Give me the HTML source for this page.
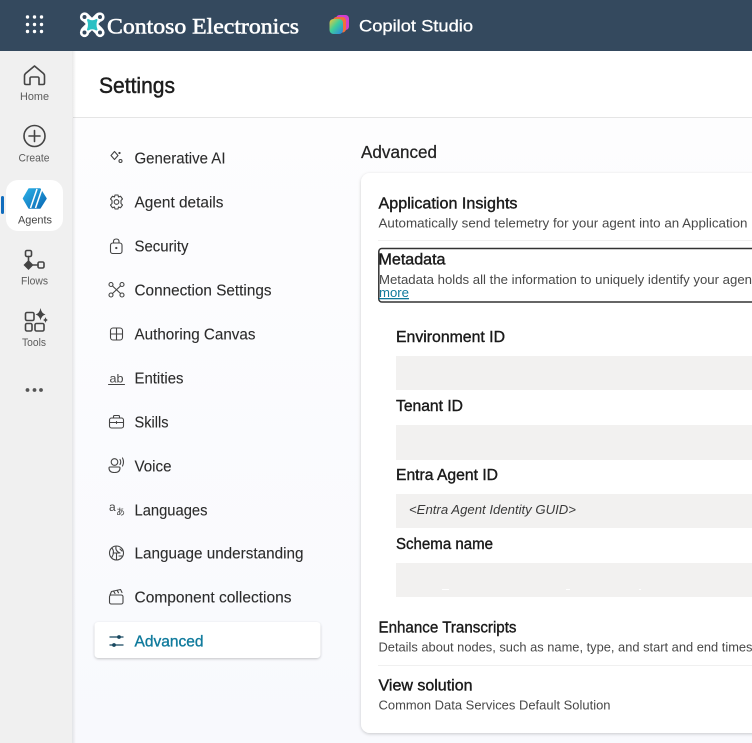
<!DOCTYPE html>
<html lang="en">
<head>
<meta charset="utf-8">
<title>Settings - Copilot Studio</title>
<style>
html,body{margin:0;padding:0;background:#fff;width:752px;height:743px;overflow:hidden}
svg{display:block}
text{font-family:"Liberation Sans",Arial,sans-serif;}
.nav{font-size:15.5px;fill:#2b2b2b;stroke:#2b2b2b;stroke-width:.1}
.side{font-size:11px;fill:#5c5c5c;text-anchor:middle}
.h{font-size:15.5px;fill:#1a1a1a;stroke:#1a1a1a;stroke-width:.38}
.d{font-size:13px;fill:#484848}
.ic{fill:none;stroke:#444;stroke-width:1.1;stroke-linecap:round;stroke-linejoin:round}
.sb{fill:none;stroke:#444;stroke-width:1.6;stroke-linecap:round;stroke-linejoin:round}
</style>
</head>
<body>
<svg width="752" height="743" viewBox="0 0 752 743" xmlns="http://www.w3.org/2000/svg">
<defs>
<linearGradient id="bg" x1="0" y1="0" x2="0" y2="1"><stop offset="0" stop-color="#fdfdfe"/><stop offset="1" stop-color="#f8f9fd"/></linearGradient>
<linearGradient id="sh" x1="0" y1="0" x2="1" y2="0"><stop offset="0" stop-color="#000" stop-opacity=".09"/><stop offset="1" stop-color="#000" stop-opacity="0"/></linearGradient>
<linearGradient id="cp" x1="0" y1="0" x2="1" y2="1"><stop offset="0" stop-color="#f3c63a"/><stop offset=".45" stop-color="#3fcf9a"/><stop offset="1" stop-color="#2b7fe8"/></linearGradient>
<linearGradient id="ag" x1="0" y1="0" x2="1" y2="1"><stop offset="0" stop-color="#2bb0e6"/><stop offset="1" stop-color="#0a68b4"/></linearGradient>
<filter id="cs" x="-5%" y="-5%" width="110%" height="110%"><feDropShadow dx="0" dy="1" stdDeviation="1.5" flood-color="#000" flood-opacity=".2"/></filter>
<filter id="is" x="-5%" y="-20%" width="110%" height="140%"><feDropShadow dx="0" dy="1" stdDeviation="1.2" flood-color="#000" flood-opacity=".22"/></filter>
</defs>

<!-- page background -->
<rect x="72" y="51" width="680" height="692" fill="#fff"/>
<rect x="72" y="118" width="680" height="625" fill="url(#bg)"/>
<rect x="73" y="117" width="679" height="1" fill="#e5e5e5"/>

<!-- left rail -->
<rect x="0" y="51" width="72" height="692" fill="#f0f0f0"/>
<rect x="72" y="51" width="4" height="692" fill="url(#sh)"/>

<!-- top bar -->
<rect x="0" y="0" width="752" height="51" fill="#34495e"/>
<g fill="#fff">
<circle cx="27.5" cy="17" r="1.7"/><circle cx="34.5" cy="17" r="1.7"/><circle cx="41.5" cy="17" r="1.7"/>
<circle cx="27.5" cy="24.5" r="1.7"/><circle cx="34.5" cy="24.5" r="1.7"/><circle cx="41.5" cy="24.5" r="1.7"/>
<circle cx="27.5" cy="31.5" r="1.7"/><circle cx="34.5" cy="31.5" r="1.7"/><circle cx="41.5" cy="31.5" r="1.7"/>
</g>
<!-- drone logo -->
<g>
<path d="M85 17 L99 31 M99 17 L85 31" stroke="#fff" stroke-width="9" stroke-linecap="round"/>
<circle cx="84.500" cy="17" r="3.300" fill="#34495e" stroke="#fff" stroke-width="2.600"/>
<circle cx="100" cy="17" r="3.300" fill="#34495e" stroke="#fff" stroke-width="2.600"/>
<circle cx="84.500" cy="32.500" r="3.300" fill="#34495e" stroke="#fff" stroke-width="2.600"/>
<circle cx="100" cy="32.500" r="3.300" fill="#34495e" stroke="#fff" stroke-width="2.600"/>
<path d="M88 20 Q92.200 22.500 96.500 20 Q94.500 24.700 96.500 29.500 Q92.200 27 88 29.500 Q90 24.700 88 20Z" fill="#2cc0c4" stroke="#2cc0c4" stroke-width="2" stroke-linejoin="round"/>
</g>
<text x="107" y="33.500" font-size="22" fill="#fff" stroke="#fff" stroke-width=".55" textLength="192" lengthAdjust="spacingAndGlyphs" style="font-family:'Liberation Serif',serif">Contoso Electronics</text>
<!-- copilot logo -->
<g>
<rect x="336" y="15" width="13" height="15" rx="3.500" fill="#d23fd0"/>
<rect x="333" y="17" width="13" height="15.500" rx="3.500" fill="#f0703c"/>
<rect x="329.500" y="19" width="13.500" height="15" rx="4" fill="url(#cp)"/>
</g>
<text x="359" y="31.500" font-size="17" fill="#fff" stroke="#fff" stroke-width=".3" textLength="114" lengthAdjust="spacingAndGlyphs">Copilot Studio</text>

<!-- rail items -->
<path class="sb" d="M25.500 73.500 L34.500 66 L43.500 73.500 Q44.500 74.500 44.500 76 V83 Q44.500 84.500 43 84.500 H39 V78.500 Q39 77 37.500 77 H31.500 Q30 77 30 78.500 V84.500 H26 Q24.500 84.500 24.500 83 V76 Q24.500 74.500 25.500 73.500Z"/>
<text class="side" x="34.500" y="100" textLength="29" lengthAdjust="spacingAndGlyphs">Home</text>
<circle class="sb" cx="34.500" cy="136" r="10.500"/>
<path class="sb" d="M34.500 130.500 V141.500 M29 136 H40"/>
<text class="side" x="34" y="161.500" textLength="31" lengthAdjust="spacingAndGlyphs">Create</text>

<rect x="6" y="180" width="57" height="51" rx="12" fill="#fff"/>
<rect x="1" y="196" width="3" height="18" rx="1.500" fill="#0f6cbd"/>
<path d="M29 189 H40 L46 198.500 L40 208 H29 L23.500 198.500 Z" fill="url(#ag)" stroke="url(#ag)" stroke-width="1.500" stroke-linejoin="round"/>
<path d="M30.500 208 L37 189 M35.500 208 L42 189" stroke="#fff" stroke-width="1.500"/>
<text class="side" x="35" y="223.500" textLength="34" lengthAdjust="spacingAndGlyphs" style="fill:#444">Agents</text>

<g class="sb">
<rect x="25.500" y="250.500" width="6" height="6" rx="1.500"/>
<path d="M28.500 256.500 V260.500 M33 265 H38"/>
<rect x="38" y="262" width="6" height="6" rx="1.500"/>
</g>
<path d="M28.500 260 L33.500 265 L28.500 270 L23.500 265 Z" fill="#444"/>
<text class="side" x="34.500" y="284.500" textLength="27" lengthAdjust="spacingAndGlyphs">Flows</text>

<g class="sb">
<rect x="25.500" y="312.500" width="8.500" height="8" rx="1.500"/>
<rect x="25.500" y="323.500" width="6.500" height="7.500" rx="1.500"/>
<rect x="35" y="323.500" width="9" height="7.500" rx="1.500"/>
</g>
<path d="M40.500 308 Q41.500 313.500 45.500 314.500 Q41.500 315.500 40.500 320.500 Q39.500 315.500 35.500 314.500 Q39.500 313.500 40.500 308Z" fill="#444"/>
<path d="M45.500 317 Q46 319.500 48 320 Q46 320.500 45.500 323 Q45 320.500 43 320 Q45 319.500 45.500 317Z" fill="#444"/>
<text class="side" x="34" y="346" textLength="24" lengthAdjust="spacingAndGlyphs">Tools</text>
<g fill="#555"><circle cx="27.500" cy="390" r="1.900"/><circle cx="34.500" cy="390" r="1.900"/><circle cx="41" cy="390" r="1.900"/></g>

<!-- settings title -->
<text x="99" y="93" font-size="22" fill="#1c1c1c" stroke="#1c1c1c" stroke-width=".45" textLength="76" lengthAdjust="spacingAndGlyphs">Settings</text>

<!-- settings nav: icons -->
<g class="ic">
<path d="M114.500 151.500 L118 155.500 L114.500 159.500 L111 155.500 Z"/>
<circle cx="120.500" cy="161" r="1.500"/><circle cx="119.500" cy="153" r=".6"/>
<circle cx="116.500" cy="202" r="2.300"/>
<path d="M115 195 H118 L118.500 197 L120.500 196.200 L122.500 199 L121 200.500 V203.500 L122.500 205 L120.500 207.800 L118.500 207 L118 209 H115 L114.500 207 L112.500 207.800 L110.500 205 L112 203.500 V200.500 L110.500 199 L112.500 196.200 L114.500 197 Z"/>
<rect x="110.500" y="243" width="11.500" height="10.500" rx="2.300"/>
<path d="M113.500 243 V241.500 Q113.500 239 116.300 239 Q119 239 119 241.500 V243"/>
<circle cx="116.300" cy="248" r=".6"/>
<circle cx="111" cy="284.500" r="2"/><circle cx="122" cy="284.500" r="2"/><circle cx="111" cy="295" r="2"/><circle cx="122" cy="295" r="2"/>
<path d="M112.500 286 L120.500 293.500 M120.500 286 L112.500 293.500"/>
<rect x="110.500" y="328" width="12" height="12" rx="2.500"/>
<path d="M116.500 328 V340 M110.500 334 H122.500"/>
<path d="M108.500 384.500 H124.500"/>
<rect x="109.500" y="418" width="14" height="10" rx="2"/>
<path d="M113.500 418 V416.500 Q113.500 415.500 114.500 415.500 H118.500 Q119.500 415.500 119.500 416.500 V418 M109.500 422.500 H123.500 M116.500 421.500 V423.500"/>
<circle cx="114.500" cy="462" r="3.300"/>
<path d="M110 467 H119 Q120 467 120 468 Q120 472.500 114.500 472.500 Q109 472.500 109 468 Q109 467 110 467Z"/>
<path d="M120 459.500 Q121.500 462 120 464.500 M122.500 458 Q124.500 462 122.500 466"/>
<circle cx="116.500" cy="553" r="7"/>
<path d="M112 548 Q115 552 112 557 M116 546.500 Q115 551 120 553 M113 553 H119 M116.500 553 V560 M120 549 L122 551 M119 556 L122 556"/>
<rect x="109.500" y="595" width="13.500" height="9" rx="1.800"/>
<path d="M110 595 L111.500 591.500 L120.500 589.500 L122 592.500 M113.500 591 L115 593.500 M117 590.200 L118.500 592.800"/>
</g>
<text x="109.500" y="382.500" font-size="12" fill="#444" textLength="14" lengthAdjust="spacingAndGlyphs">ab</text>
<text x="109" y="511" font-size="12" fill="#444">a</text>
<text x="116" y="515" font-size="9" fill="#444" style="font-family:'Liberation Sans','Noto Sans CJK JP',sans-serif">あ</text>

<!-- settings nav: selected -->
<rect x="94.500" y="622" width="226" height="36" rx="4" fill="#fff" filter="url(#is)"/>
<g fill="none" stroke="#17475f" stroke-width="1.300" stroke-linecap="round">
<path d="M110 637 H123 M110 645 H123"/>
</g>
<circle cx="119" cy="637" r="1.900" fill="#17475f"/><circle cx="114" cy="645" r="1.900" fill="#17475f"/>

<!-- settings nav: labels -->
<text class="nav" x="134.500" y="163.500" textLength="91" lengthAdjust="spacingAndGlyphs">Generative AI</text>
<text class="nav" x="134.500" y="207.500" textLength="89" lengthAdjust="spacingAndGlyphs">Agent details</text>
<text class="nav" x="134.500" y="251.500" textLength="54" lengthAdjust="spacingAndGlyphs">Security</text>
<text class="nav" x="134.500" y="295.500" textLength="137" lengthAdjust="spacingAndGlyphs">Connection Settings</text>
<text class="nav" x="134.500" y="339.500" textLength="121" lengthAdjust="spacingAndGlyphs">Authoring Canvas</text>
<text class="nav" x="134.500" y="383.500" textLength="49" lengthAdjust="spacingAndGlyphs">Entities</text>
<text class="nav" x="134.500" y="427.500" textLength="34" lengthAdjust="spacingAndGlyphs">Skills</text>
<text class="nav" x="134.500" y="471.500" textLength="37" lengthAdjust="spacingAndGlyphs">Voice</text>
<text class="nav" x="134.500" y="515.500" textLength="73" lengthAdjust="spacingAndGlyphs">Languages</text>
<text class="nav" x="134.500" y="558.500" textLength="169" lengthAdjust="spacingAndGlyphs">Language understanding</text>
<text class="nav" x="134.500" y="602.500" textLength="157" lengthAdjust="spacingAndGlyphs">Component collections</text>
<text class="nav" x="134.500" y="646.500" textLength="69" lengthAdjust="spacingAndGlyphs" style="fill:#0f7a9c;stroke:#0f7a9c;stroke-width:.35">Advanced</text>

<!-- main -->
<text x="361" y="158" font-size="17.500" fill="#222" stroke="#222" stroke-width=".25" textLength="76" lengthAdjust="spacingAndGlyphs">Advanced</text>

<rect x="361" y="173" width="440" height="560" rx="9" fill="#fff" filter="url(#cs)"/>

<text class="h" x="378.500" y="208.500" textLength="139" lengthAdjust="spacingAndGlyphs">Application Insights</text>
<text class="d" x="378.500" y="227.500" textLength="369" lengthAdjust="spacingAndGlyphs">Automatically send telemetry for your agent into an Application</text>
<rect x="378" y="240" width="374" height="1" fill="#f0f0f0"/>

<rect x="378.800" y="248.500" width="400" height="53.500" rx="3" fill="none" stroke="#333" stroke-width="1.500"/>
<text class="h" x="378.500" y="264.500" textLength="67" lengthAdjust="spacingAndGlyphs">Metadata</text>
<text class="d" x="379" y="284" textLength="373" lengthAdjust="spacingAndGlyphs">Metadata holds all the information to uniquely identify your agen</text>
<text x="379" y="297" font-size="13" fill="#0f7a9c" text-decoration="underline" textLength="30" lengthAdjust="spacingAndGlyphs">more</text>

<text class="h" x="396" y="342" textLength="109" lengthAdjust="spacingAndGlyphs">Environment ID</text>
<rect x="396" y="356" width="356" height="34" fill="#f2f1f0"/>
<text class="h" x="396" y="411" textLength="67" lengthAdjust="spacingAndGlyphs">Tenant ID</text>
<rect x="396" y="425" width="356" height="35" fill="#f2f1f0"/>
<text class="h" x="396" y="480" textLength="102" lengthAdjust="spacingAndGlyphs">Entra Agent ID</text>
<rect x="396" y="494" width="356" height="34" fill="#f2f1f0"/>
<text x="409" y="514" font-size="13" font-style="italic" fill="#3a3a3a" textLength="167" lengthAdjust="spacingAndGlyphs">&lt;Entra Agent Identity GUID&gt;</text>
<text class="h" x="396" y="549" textLength="97" lengthAdjust="spacingAndGlyphs">Schema name</text>
<rect x="396" y="563" width="356" height="34" fill="#f2f1f0"/>
<g fill="#fff"><rect x="442" y="589" width="7" height="1"/><rect x="566" y="589" width="4" height="1"/><rect x="639" y="589" width="2" height="1"/></g>

<text class="h" x="378.500" y="632.500" textLength="138" lengthAdjust="spacingAndGlyphs">Enhance Transcripts</text>
<text class="d" x="378.500" y="651.500" textLength="374" lengthAdjust="spacingAndGlyphs">Details about nodes, such as name, type, and start and end times</text>
<rect x="378" y="665" width="374" height="1" fill="#f0f0f0"/>
<text class="h" x="378.500" y="690.500" textLength="94" lengthAdjust="spacingAndGlyphs">View solution</text>
<text class="d" x="378.500" y="709.500" textLength="232" lengthAdjust="spacingAndGlyphs">Common Data Services Default Solution</text>
</svg>
</body>
</html>
